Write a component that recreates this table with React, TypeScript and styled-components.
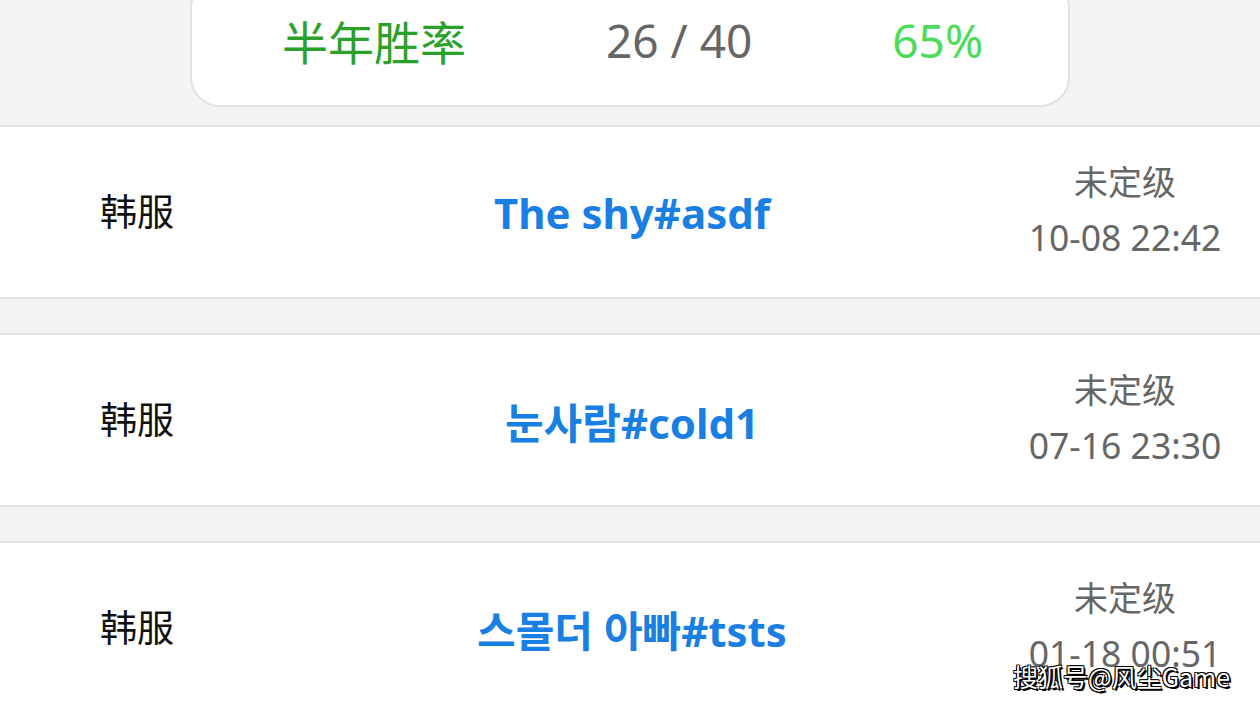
import React, { FC } from 'react';
import styled, { createGlobalStyle } from 'styled-components';

const GlobalStyle = createGlobalStyle`
    html, body {
        margin: 0;
        padding: 0;
        background: #f4f4f4;
        overflow: hidden;
    }
    body {
        font-family: 'Noto Sans', 'Noto Sans CJK SC', sans-serif;
    }
`;

const Page = styled.div`
    position: relative;
    width: 1260px;
    height: 708px;
    overflow: hidden;
    background: #f4f4f4;
`;

const SummaryCard = styled.div`
    box-sizing: border-box;
    width: 880px;
    height: 129px;
    margin: -22px 0 0 190px;
    padding: 0 0 6px 90px;
    display: flex;
    align-items: center;
    gap: 140px;
    background: #fff;
    border: 2px solid #e2e2e2;
    border-radius: 30px;
    font-size: 46px;
`;

const StatLabel = styled.div`
    color: #2aa12a;
    font-family: 'Noto Sans CJK SC', sans-serif;
`;

const StatValue = styled.div<{ $color: string }>`
    color: ${(props) => props.$color};
    font-family: 'Noto Sans', sans-serif;
`;

const List = styled.div`
    margin-top: 18px;
    display: flex;
    flex-direction: column;
    gap: 34px;
`;

const Row = styled.div`
    box-sizing: border-box;
    height: 174px;
    display: grid;
    grid-template-columns: 270px 1fr 270px;
    align-items: center;
    background: #fff;
    border-top: 2px solid #e2e2e2;
    border-bottom: 2px solid #e2e2e2;
`;

const Server = styled.div`
    padding-left: 100px;
    padding-bottom: 4px;
    font-size: 37px;
    color: #111;
    font-family: 'Noto Sans CJK SC', sans-serif;
`;

const Name = styled.div`
    text-align: center;
    padding-left: 4px;
    font-size: 42px;
    font-weight: 700;
    color: #1a7fe2;
    font-family: 'Noto Sans', 'Noto Sans CJK KR', sans-serif;
`;

const Meta = styled.div`
    display: flex;
    flex-direction: column;
    align-items: center;
    gap: 8px;
    padding-bottom: 6px;
    color: #666;
`;

const Rank = styled.div`
    font-size: 34px;
    line-height: 48px;
    font-family: 'Noto Sans CJK SC', sans-serif;
`;

const Time = styled.div`
    font-size: 35.5px;
    line-height: 48px;
`;

const Watermark = styled.div`
    position: absolute;
    right: 30px;
    bottom: 14px;
    font-size: 25px;
    color: #fff;
    font-family: 'Noto Sans CJK SC', sans-serif;
    text-shadow:
        -1px -1px 0 #000,
        1px -1px 0 #000,
        -1px 1px 0 #000,
        1px 1px 0 #000,
        2px 2px 0 #000;
`;

const matches = [
    { server: '韩服', name: 'The shy#asdf', rank: '未定级', time: '10-08 22:42' },
    { server: '韩服', name: '눈사람#cold1', rank: '未定级', time: '07-16 23:30' },
    { server: '韩服', name: '스몰더 아빠#tsts', rank: '未定级', time: '01-18 00:51' },
];

const App: FC = () => (
    <Page>
        <GlobalStyle />
        <SummaryCard>
            <StatLabel>半年胜率</StatLabel>
            <StatValue $color="#666">26 / 40</StatValue>
            <StatValue $color="#4ddb5a">65%</StatValue>
        </SummaryCard>
        <List>
            {matches.map((m) => (
                <Row key={m.name}>
                    <Server>{m.server}</Server>
                    <Name>{m.name}</Name>
                    <Meta>
                        <Rank>{m.rank}</Rank>
                        <Time>{m.time}</Time>
                    </Meta>
                </Row>
            ))}
        </List>
        <Watermark>搜狐号@风尘Game</Watermark>
    </Page>
);

export default App;
